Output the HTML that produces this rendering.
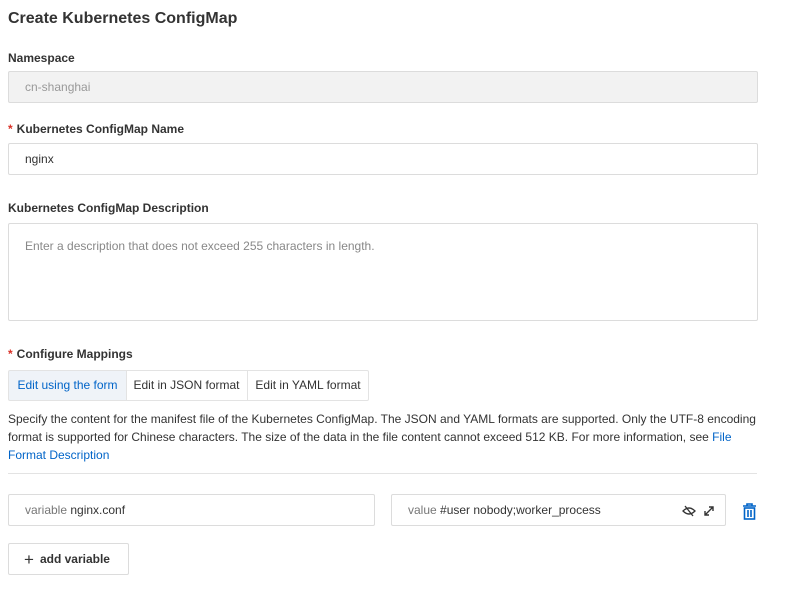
<!DOCTYPE html>
<html><head><style>
body{margin:0;width:802px;height:595px;background:#fff;font-family:"Liberation Sans",sans-serif;color:#333;position:relative;overflow:hidden}
.a{position:absolute}
.t{left:8px;top:10px;font-size:16px;font-weight:bold;color:#333}
.l{left:8px;font-size:12px;font-weight:bold;color:#333}
.l b{color:#d93026;margin-right:4px}
.in{left:8px;width:750px;border:1px solid #dcdcdc;border-radius:2px;font-size:12px;box-sizing:border-box;padding-left:16px}
.tab{top:370px;height:31px;box-sizing:border-box;border:1px solid #e3e3e3;font-size:12px;line-height:29px;text-align:center}
p{margin:0}
</style></head><body>
<div class="a t">Create Kubernetes ConfigMap</div>
<div class="a l" style="top:51px">Namespace</div>
<div class="a in" style="top:71px;height:32px;line-height:30px;background:#f2f2f2;color:#999">cn-shanghai</div>
<div class="a l" style="top:122px"><b>*</b>Kubernetes ConfigMap Name</div>
<div class="a in" style="top:143px;height:32px;line-height:30px;color:#333">nginx</div>
<div class="a l" style="top:201px">Kubernetes ConfigMap Description</div>
<div class="a in" style="top:223px;height:98px;padding-top:15px;color:#888">Enter a description that does not exceed 255 characters in length.</div>
<div class="a l" style="top:347px"><b>*</b>Configure Mappings</div>
<div class="a tab" style="left:8px;width:119px;background:#eff3f8;color:#0064c8;border-radius:2px 0 0 2px">Edit using the form</div>
<div class="a tab" style="left:126px;width:122px;border-left:none">Edit in JSON format</div>
<div class="a tab" style="left:247px;width:122px;border-radius:0 2px 2px 0">Edit in YAML format</div>
<div class="a" style="left:8px;top:410px;width:760px;font-size:12px;line-height:18px;color:#333">Specify the content for the manifest file of the Kubernetes ConfigMap. The JSON and YAML formats are supported. Only the UTF-8 encoding format is supported for Chinese characters. The size of the data in the file content cannot exceed 512 KB. For more information, see <span style="color:#0064c8">File Format Description</span></div>
<div class="a" style="left:8px;top:473px;width:749px;height:1px;background:#e3e3e3"></div>
<div class="a in" style="top:494px;width:367px;height:32px;line-height:30px"><span style="color:#777">variable</span> nginx.conf</div>
<div class="a in" style="left:391px;top:494px;width:335px;height:32px;line-height:30px"><span style="color:#777">value</span> #user nobody;worker_process
<svg class="a" style="left:290px;top:10px" width="14" height="12" viewBox="0 0 14 12"><path d="M1 6Q7 0 13 6Q7 12 1 6Z" fill="none" stroke="#333" stroke-width="1.3"/><path d="M3 1L11 11" stroke="#333" stroke-width="1.3"/></svg>
<svg class="a" style="left:311px;top:10px" width="12" height="12" viewBox="0 0 12 12"><path d="M2 10L10 2M6 2H10V6M2 6V10H6" fill="none" stroke="#333" stroke-width="1.4"/></svg>
</div>
<svg class="a" style="left:742px;top:503px" width="15" height="17" viewBox="0 0 15 17"><path d="M1 3H14M5 3V1H10V3" fill="none" stroke="#0064c8" stroke-width="1.6"/><rect x="2.5" y="5" width="10" height="11" fill="none" stroke="#0064c8" stroke-width="1.6"/><path d="M6 7V14M9 7V14" stroke="#0064c8" stroke-width="1.6"/></svg>
<div class="a" style="left:8px;top:543px;width:121px;height:32px;box-sizing:border-box;border:1px solid #dcdcdc;border-radius:2px;font-size:12px;line-height:30px;padding-left:15px;font-weight:bold"><span style="font-size:17px;font-weight:normal;vertical-align:-2px;margin-right:6px">+</span>add variable</div>
</body></html>
